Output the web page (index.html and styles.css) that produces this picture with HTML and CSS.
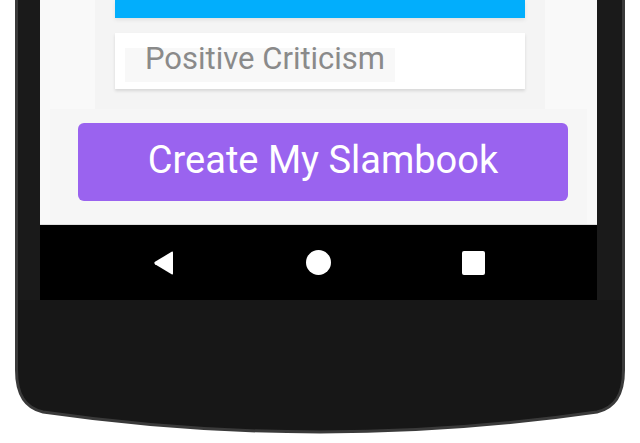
FILE: index.html
```html
<!DOCTYPE html>
<html>
<head>
<meta charset="utf-8">
<link rel="stylesheet" href="styles.css">
</head>
<body>
<div class="phone">
  <div class="phone-top">
    <div class="display">
      <div class="screen">
        <div class="form-area">
          <div class="accent-bar"></div>
          <div class="card">
            <div class="field">Positive Criticism</div>
          </div>
        </div>
        <div class="action-area">
          <button class="create-btn">Create My Slambook</button>
        </div>
      </div>
      <div class="navbar">
        <svg class="nav-back" width="22" height="26" viewBox="0 0 22 26"><path d="M20 2.5 L20 23.5 Q20 25 18.6 24.2 L2 14.2 Q0.6 13 2 11.8 L18.6 1.8 Q20 1 20 2.5 Z" fill="#fff"/></svg>
        <span class="nav-home"></span>
        <span class="nav-recent"></span>
      </div>
    </div>
  </div>
  <svg class="chin" width="610" height="143" viewBox="0 0 610 143">
    <path d="M1.5 -2 L1.5 70 C1.5 95 10 108 28 112 Q305 152 582 112 C600 108 608.5 95 608.5 70 L608.5 -2 Z" fill="#171717" stroke="#3a3a3a" stroke-width="3"/>
  </svg>
</div>
</body>
</html>
```
FILE: styles.css
```css
html, body {
  margin: 0;
  padding: 0;
}
body {
  width: 640px;
  height: 443px;
  overflow: hidden;
  background: #ffffff;
  font-family: Roboto, "Noto Sans", sans-serif;
}
.phone {
  margin-left: 15px;
  width: 610px;
  display: flex;
  flex-direction: column;
}
.phone-top {
  display: flex;
  background: #1a1a1a;
  border-left: 3px solid #3a3a3a;
  border-right: 3px solid #3a3a3a;
  padding: 0 25px 0 22px;
}
.display {
  width: 557px;
  display: flex;
  flex-direction: column;
}
.screen {
  height: 225px;
  background: #f9f9f9;
  display: flex;
  flex-direction: column;
  box-sizing: border-box;
  border-bottom: 1px solid #dedede;
}
.form-area {
  margin: 0 52px 0 55px;
  padding: 0 20px 20px;
  background: #f4f4f4;
  display: flex;
  flex-direction: column;
}
.accent-bar {
  height: 18px;
  background: #02aefc;
  box-shadow: 0 2px 4px rgba(0,0,0,0.08);
}
.card {
  margin-top: 15px;
  height: 56px;
  background: #ffffff;
  box-shadow: 0 2px 3px rgba(0,0,0,0.12);
  padding: 15px 0 0 10px;
  box-sizing: border-box;
}
.field {
  width: 270px;
  height: 34px;
  box-sizing: border-box;
  padding-left: 20px;
  background: #f8f8f8;
  color: #8a8a8a;
  font-size: 31px;
  line-height: 22px;
  white-space: nowrap;
}
.action-area {
  margin: 0 10px 0 10px;
  padding: 14px 19px 0 28px;
  flex: 1;
  display: flex;
  flex-direction: column;
  background: #f6f6f6;
}
.create-btn {
  height: 78px;
  border: none;
  border-radius: 6px;
  background: #9a63ef;
  color: #ffffff;
  font-family: Roboto, "Noto Sans", sans-serif;
  font-size: 38px;
  padding: 0 0 5px;
}
.navbar {
  height: 75px;
  background: #000000;
  display: flex;
  align-items: center;
  justify-content: center;
  gap: 131px;
}
.nav-back {
  display: block;
}
.nav-home {
  width: 25px;
  height: 25px;
  border-radius: 50%;
  background: #ffffff;
}
.nav-recent {
  width: 23px;
  height: 24px;
  border-radius: 2px;
  background: #ffffff;
}
.chin {
  display: block;
}
```
